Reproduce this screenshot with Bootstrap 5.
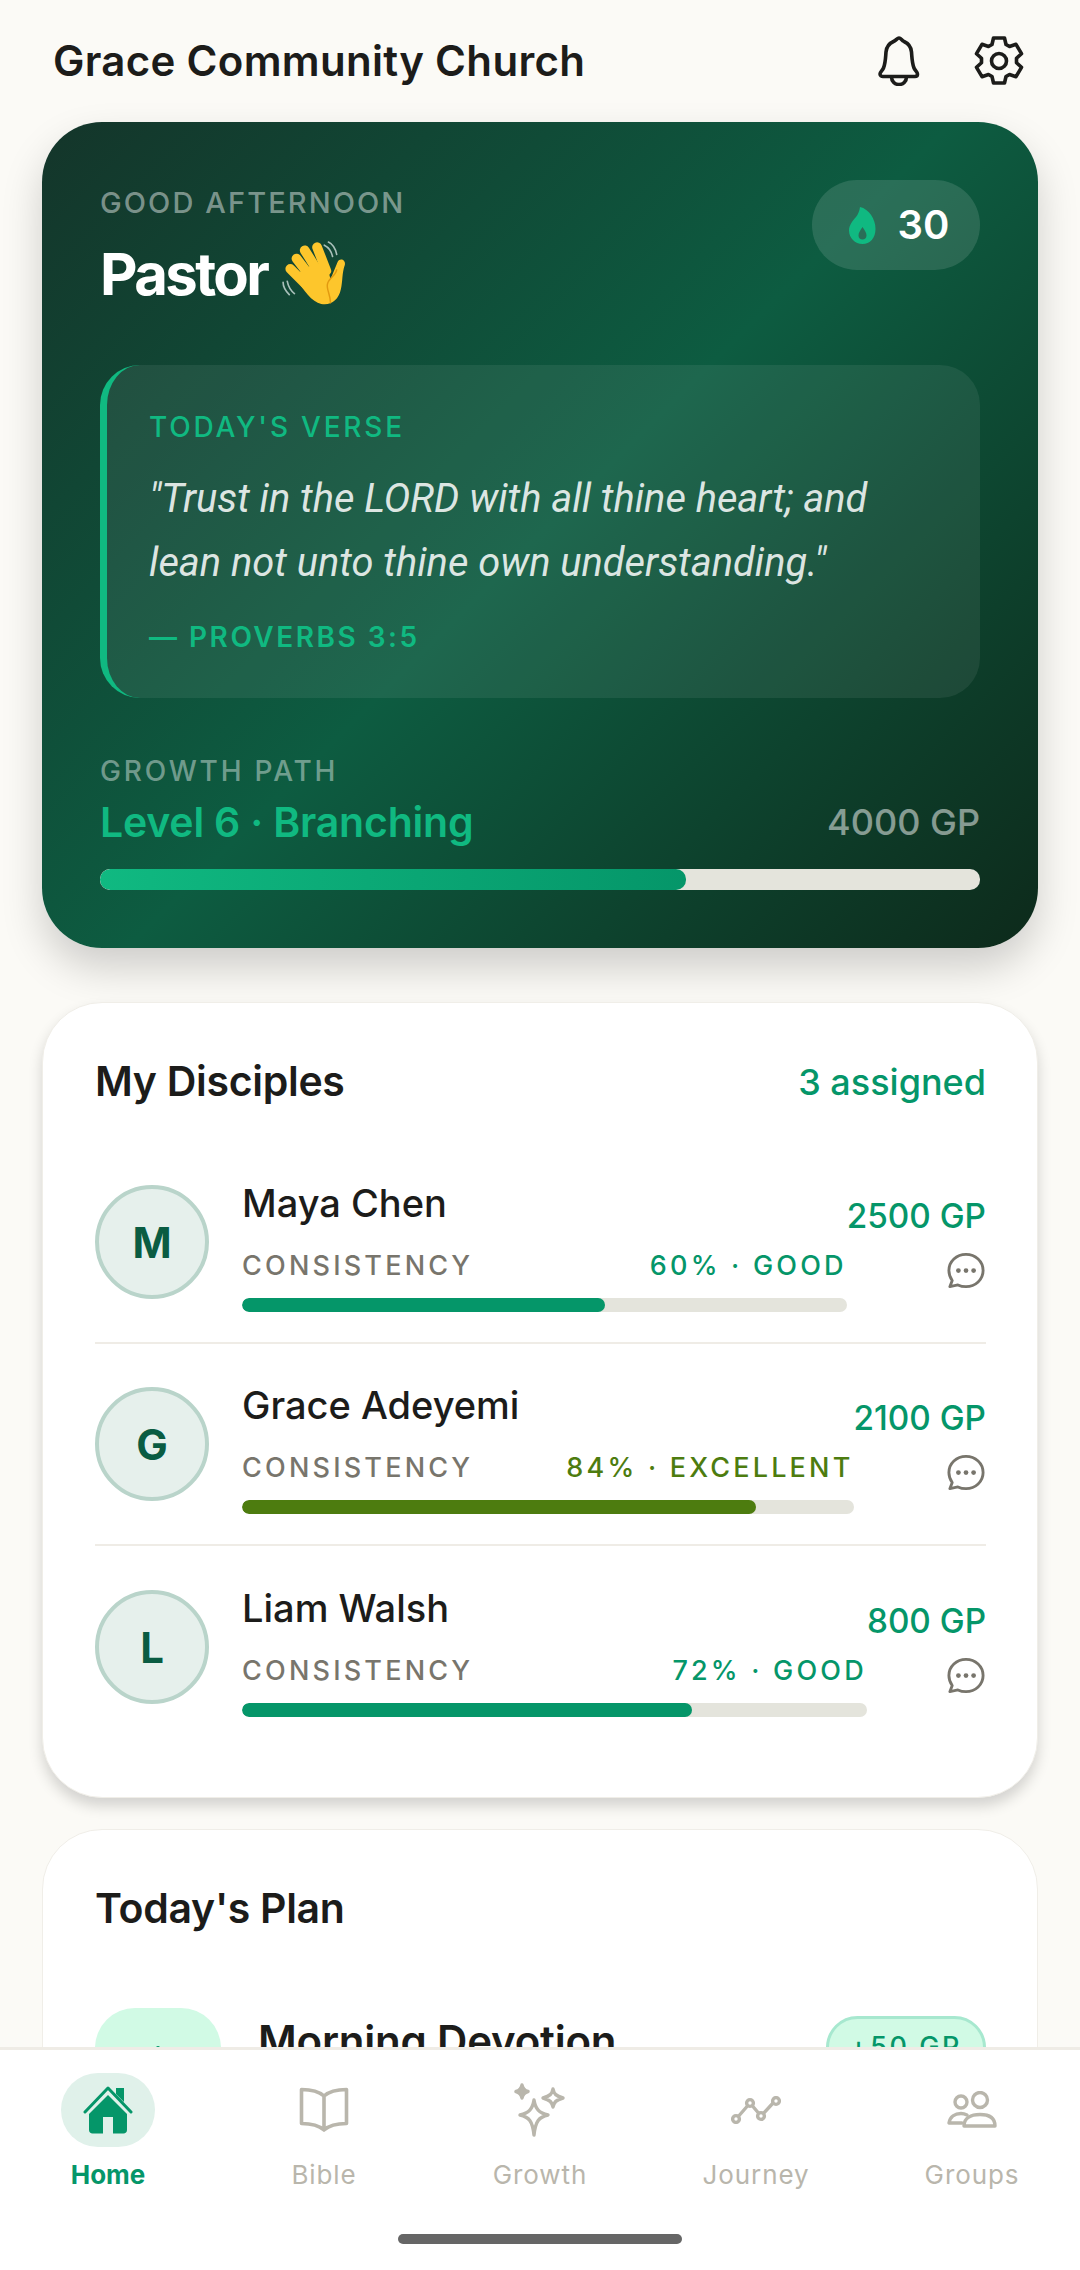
<!DOCTYPE html>
<html lang="en">
<head>
    <meta charset="UTF-8">
    <meta name="viewport" content="width=device-width, initial-scale=1.0">
    <title>Grace Community Church</title>
    <link href="https://cdn.jsdelivr.net/npm/bootstrap@5.3.0/dist/css/bootstrap.min.css" rel="stylesheet">
    <style>
        html, body { height: 2270px; overflow: hidden; }
        body {
            background: #fbfaf6;
            color: #1c1c1a;
            font-family: Inter, "Liberation Sans", sans-serif;
        }
        .app-shell { height: 2270px; }
        .app-scroll { min-height: 0; overflow: hidden; padding: 0 42px; }

        .top-bar { height: 122px; padding: 0 12px 0 11px; }
        .church-name { font-size: 42px; font-weight: 600; letter-spacing: .3px; margin: 0; }
        .top-icons { gap: 54px; margin-right: 2px; }

        .hero-card {
            height: 826px;
            padding: 58px;
            border-radius: 60px;
            color: #fff;
            background: linear-gradient(135deg, #14352a 0%, #0d5c41 50%, #0d2a1b 100%);
            box-shadow: 0 20px 40px rgba(0, 0, 0, .18);
        }
        .greet-label { font-size: 29px; font-weight: 500; letter-spacing: 2.1px; color: rgba(255, 255, 255, .45); line-height: 46px; }
        .greet-row { margin-top: 10px; gap: 14px; height: 76px; }
        .greet-name { font-size: 58px; font-weight: 700; line-height: 76px; margin: 0; letter-spacing: -2.6px; }
        .streak-pill { width: 168px; height: 90px; gap: 22px; padding-left: 6px; border-radius: 45px; background: rgba(255, 255, 255, .12); font-size: 40px; font-weight: 600; }

        .verse-box {
            margin-top: 53px;
            height: 333px;
            padding: 44px 44px 0 42px;
            border-left: 7px solid #10b981;
            border-radius: 40px;
            background: rgba(255, 255, 255, .07);
        }
        .verse-label { font-size: 28px; font-weight: 500; letter-spacing: 2.8px; color: #10b981; line-height: 36px; }
        .verse-text { font-family: Roboto, sans-serif; font-style: italic; font-weight: 400; font-size: 39.8px; line-height: 64px; color: rgba(255, 255, 255, .86); margin: 22px 0 0; }
        .verse-ref { font-size: 28px; font-weight: 600; letter-spacing: 2.5px; color: #10b981; line-height: 36px; margin-top: 24px; }

        .path-label { margin-top: 56px; font-size: 28px; font-weight: 500; letter-spacing: 2.8px; color: rgba(255, 255, 255, .42); line-height: 34px; }
        .path-row { margin-top: 7px; }
        .path-level { font-size: 41px; font-weight: 600; color: #10b981; line-height: 54px; letter-spacing: -.2px; }
        .path-gp { font-size: 36px; font-weight: 500; color: rgba(255, 255, 255, .5); }
        .path-track { height: 21px; margin-top: 20px; border-radius: 10px; background: #e4e4dc; overflow: hidden; }
        .path-fill { height: 100%; border-radius: 10px; background: linear-gradient(90deg, #10b981, #059669); }

        .white-card {
            border-radius: 60px;
            background: #fff;
            border: 1px solid #f0eee8;
            padding: 0 51px 0 52px;
        }
        .disciples-card { margin-top: 54px; height: 796px; box-shadow: 0 8px 14px rgba(0, 0, 0, .16); }
        .plan-card { margin-top: 31px; height: 500px; }
        .card-head { height: 139px; padding-top: 18px; }
        .plan-head { height: 157px; }
        .card-title { font-size: 41px; font-weight: 600; margin: 0; letter-spacing: -.3px; }
        .assigned-count { font-size: 36px; font-weight: 500; color: #059669; }

        .disciple-row { height: 202px; padding: 30px 0; gap: 33px; border-bottom: 2px solid #efece6; }
        .disciple-row:last-child { border-bottom: 0; }
        .disciple-avatar {
            flex: 0 0 114px; height: 114px; border-radius: 50%;
            background: #e6f0ec; border: 4px solid #b9d4ca;
            color: #0a5c42; font-size: 42px; font-weight: 700;
        }
        .disciple-name { font-size: 38px; font-weight: 500; line-height: 46px; margin-top: 8px; }
        .consistency-line { font-size: 27px; line-height: 36px; letter-spacing: 3.2px; margin-top: 22px; }
        .consistency-label { color: #78756c; font-weight: 500; }
        .consistency-good { color: #059669; font-weight: 500; }
        .consistency-top { color: #4d7c0f; font-weight: 500; }
        .mini-track { height: 14px; margin-top: 14px; border-radius: 7px; background: #e4e4dc; overflow: hidden; }
        .mini-fill { height: 100%; border-radius: 7px; background: #059669; }
        .mini-fill.top-fill { background: #4d7c0f; }
        .disciple-gp { font-size: 33.3px; font-weight: 500; color: #059669; line-height: 42px; margin-top: 23px; white-space: nowrap; }
        .chat-btn { margin-top: 15px; margin-right: 1px; line-height: 0; }

        .plan-item { gap: 37px; margin-top: 21px; }
        .plan-thumb { flex: 0 0 126px; height: 126px; border-radius: 40px; background: #d1fae5; }
        .plan-title { font-size: 42px; font-weight: 600; margin: 1px 0 0; letter-spacing: -.2px; }
        .plan-gp { padding: 8px 21px; border-radius: 40px; background: #d1fae5; border: 3px solid #a7e8cf; color: #059669; font-size: 27px; font-weight: 500; letter-spacing: 2.6px; margin-top: 8px; }

        .bottom-nav { flex: 0 0 223px; background: #fff; border-top: 3px solid #efece6; position: relative; }
        .nav-tab { flex: 1 1 0; padding-top: 23px; color: #b9b6ac; font-size: 26px; letter-spacing: .9px; }
        .nav-tab.active-tab { color: #059669; font-weight: 700; letter-spacing: 0; }
        .tab-icon { width: 94px; height: 74px; border-radius: 37px; }
        .active-tab .tab-icon { background: #e0f1ea; }
        .tab-text { line-height: 34px; margin-top: 11px; }
        .home-bar { position: absolute; left: 398px; bottom: 26px; width: 284px; height: 10px; border-radius: 5px; background: #666; }
    </style>
</head>
<body>

<div class="app-shell d-flex flex-column">
    <div class="app-scroll flex-grow-1">
        <div class="top-bar d-flex justify-content-between align-items-center">
            <h1 class="church-name">Grace Community Church</h1>
            <div class="top-icons d-flex align-items-center">
                <svg width="42" height="50" viewBox="0 0 42 50" fill="none" stroke="#1c1c1a" stroke-width="3.6" stroke-linejoin="round"><path d="M21 2c2 0 2.500 2.300 5 3.500 4.500 2 7 5 7.500 10.500.500 6 .500 11 2.500 16 1 2.500 3.500 4 3.500 6 0 1.500-1 2.500-2.500 2.500h-32C3.500 40.500 2 39.500 2 38c0-2 2.500-3.500 3.500-6 2-5 2-10 2.500-16 .500-5.500 3-8.500 7.500-10.500C18.500 4.300 19 2 21 2z"/><path d="M13.500 41c0 4.500 3.500 7.500 7.500 7.500s7.500-3 7.500-7.500"/></svg>
                <svg width="50" height="52" viewBox="0 0 50 52" fill="none" stroke="#1c1c1a" stroke-width="3.6" stroke-linejoin="round"><path d="M19.500 2h11l1.500 6.500 3.500 2 6.500-2.200 5.500 9.400-5 4.600v4.400l5 4.600-5.500 9.400-6.500-2.200-3.500 2-1.500 6.500h-11L18 40.500l-3.500-2L8 40.700 2.500 31.300l5-4.600v-4.400l-5-4.600L8 8.300l6.500 2.200 3.500-2z" transform="translate(0 1)"/><circle cx="25" cy="26" r="7.500"/></svg>
            </div>
        </div>

        <div class="hero-card">
            <div class="d-flex justify-content-between align-items-start">
                <div>
                    <div class="greet-label">GOOD AFTERNOON</div>
                    <div class="greet-row d-flex align-items-center">
                        <h2 class="greet-name">Pastor</h2>
                        <svg width="66" height="68" viewBox="12 10 64 66">
                            <g fill="none" stroke="#fdc62c" stroke-width="9.5" stroke-linecap="round">
                                <path d="M21 38 37 54"/>
                                <path d="M27 28 44 50"/>
                                <path d="M35 20 50 44"/>
                                <path d="M47 17 56 40"/>
                            </g>
                            <path fill="#fdc62c" d="M25 44 46 32l11 4 3 12 7-17c2-4 8-2 7 3-3 8-2 16-4 24-2 10-10 16-19 14-9-2-17-12-26-28z"/>
                            <path fill="none" stroke="#e29a10" stroke-width="1.400" stroke-linecap="round" d="M66 39c-1 6-8 8-9 14-1 5 3 10 3 18"/>
                            <path fill="none" stroke="#a9c0ba" stroke-width="1.600" stroke-linecap="round" d="M54 15c4 2 7 6 8 11M58 12c4 2 7 7 8 12M18 50c1 5 3 9 7 12M14 51c0 5 3 9 6 12"/>
                        </svg>
                    </div>
                </div>
                <div class="streak-pill d-flex align-items-center justify-content-center">
                    <svg width="27" height="37" viewBox="0 0 27 37"><path fill="#10b981" fill-rule="evenodd" d="M11 0c9 2 15.500 12 15.500 22 0 9-5.500 15-13 15S0 31 0 23.500C0 18 4 13.500 7 10 9 7.500 10.500 4 11 0zM13.500 20c-2.500 3.500-4 6-4 8.500 0 2.500 1.800 4 4 4s4-1.500 4-4c0-2.500-1.500-5-4-8.500z"/></svg>
                    <span>30</span>
                </div>
            </div>

            <div class="verse-box">
                <div class="verse-label">TODAY'S VERSE</div>
                <p class="verse-text">"Trust in the LORD with all thine heart; and lean not unto thine own understanding."</p>
                <div class="verse-ref">— PROVERBS 3:5</div>
            </div>

            <div class="path-label">GROWTH PATH</div>
            <div class="path-row d-flex justify-content-between align-items-center">
                <span class="path-level">Level 6 · Branching</span>
                <span class="path-gp">4000 GP</span>
            </div>
            <div class="path-track"><div class="path-fill" style="width: 66.6%"></div></div>
        </div>

        <div class="white-card disciples-card">
            <div class="card-head d-flex justify-content-between align-items-center">
                <h3 class="card-title">My Disciples</h3>
                <span class="assigned-count">3 assigned</span>
            </div>

            <div class="disciple-row d-flex align-items-center">
                <div class="disciple-avatar d-flex align-items-center justify-content-center">M</div>
                <div class="flex-grow-1 d-flex">
                    <div class="flex-grow-1">
                        <div class="disciple-name">Maya Chen</div>
                        <div class="consistency-line d-flex justify-content-between">
                            <span class="consistency-label">CONSISTENCY</span>
                            <span class="consistency-good">60% · GOOD</span>
                        </div>
                        <div class="mini-track"><div class="mini-fill" style="width: 60%"></div></div>
                    </div>
                    <div class="d-flex flex-column align-items-end">
                        <div class="disciple-gp">2500 GP</div>
                        <div class="chat-btn"><svg width="38" height="37" viewBox="0 0 40 38" fill="none" stroke="#78756c" stroke-width="3" stroke-linejoin="round"><path d="M20 2c10 0 18 7.500 18 17s-8 17-18 17c-3 0-6-.600-8.500-1.800L3 36l2.500-6.500C3.300 26.500 2 23 2 19 2 9.500 10 2 20 2z"/><g fill="#78756c" stroke="none"><circle cx="12" cy="19" r="2.500"/><circle cx="20" cy="19" r="2.500"/><circle cx="28" cy="19" r="2.500"/></g></svg></div>
                    </div>
                </div>
            </div>

            <div class="disciple-row d-flex align-items-center">
                <div class="disciple-avatar d-flex align-items-center justify-content-center">G</div>
                <div class="flex-grow-1 d-flex">
                    <div class="flex-grow-1">
                        <div class="disciple-name">Grace Adeyemi</div>
                        <div class="consistency-line d-flex justify-content-between">
                            <span class="consistency-label">CONSISTENCY</span>
                            <span class="consistency-top">84% · EXCELLENT</span>
                        </div>
                        <div class="mini-track"><div class="mini-fill top-fill" style="width: 84%"></div></div>
                    </div>
                    <div class="d-flex flex-column align-items-end">
                        <div class="disciple-gp">2100 GP</div>
                        <div class="chat-btn"><svg width="38" height="37" viewBox="0 0 40 38" fill="none" stroke="#78756c" stroke-width="3" stroke-linejoin="round"><path d="M20 2c10 0 18 7.500 18 17s-8 17-18 17c-3 0-6-.600-8.500-1.800L3 36l2.500-6.500C3.300 26.500 2 23 2 19 2 9.500 10 2 20 2z"/><g fill="#78756c" stroke="none"><circle cx="12" cy="19" r="2.500"/><circle cx="20" cy="19" r="2.500"/><circle cx="28" cy="19" r="2.500"/></g></svg></div>
                    </div>
                </div>
            </div>

            <div class="disciple-row d-flex align-items-center">
                <div class="disciple-avatar d-flex align-items-center justify-content-center">L</div>
                <div class="flex-grow-1 d-flex">
                    <div class="flex-grow-1">
                        <div class="disciple-name">Liam Walsh</div>
                        <div class="consistency-line d-flex justify-content-between">
                            <span class="consistency-label">CONSISTENCY</span>
                            <span class="consistency-good">72% · GOOD</span>
                        </div>
                        <div class="mini-track"><div class="mini-fill" style="width: 72%"></div></div>
                    </div>
                    <div class="d-flex flex-column align-items-end">
                        <div class="disciple-gp">800 GP</div>
                        <div class="chat-btn"><svg width="38" height="37" viewBox="0 0 40 38" fill="none" stroke="#78756c" stroke-width="3" stroke-linejoin="round"><path d="M20 2c10 0 18 7.500 18 17s-8 17-18 17c-3 0-6-.600-8.500-1.800L3 36l2.500-6.500C3.300 26.500 2 23 2 19 2 9.500 10 2 20 2z"/><g fill="#78756c" stroke="none"><circle cx="12" cy="19" r="2.500"/><circle cx="20" cy="19" r="2.500"/><circle cx="28" cy="19" r="2.500"/></g></svg></div>
                    </div>
                </div>
            </div>
        </div>

        <div class="white-card plan-card">
            <div class="plan-head d-flex align-items-center">
                <h3 class="card-title">Today's Plan</h3>
            </div>
            <div class="plan-item d-flex align-items-start">
                <div class="plan-thumb d-flex align-items-center justify-content-center">
                    <svg width="52" height="52" viewBox="0 0 52 52" fill="none" stroke="#059669" stroke-width="4" stroke-linecap="round"><circle cx="26" cy="26" r="10"/><path d="M26 3v7M26 42v7M3 26h7M42 26h7M10 10l5 5M37 37l5 5M10 42l5-5M37 15l5-5"/></svg>
                </div>
                <div class="flex-grow-1"><div class="plan-title">Morning Devotion</div></div>
                <div class="plan-gp">+50 GP</div>
            </div>
        </div>
    </div>

    <div class="bottom-nav d-flex">
        <div class="nav-tab active-tab d-flex flex-column align-items-center">
            <div class="tab-icon d-flex align-items-center justify-content-center">
                <svg width="50" height="48" viewBox="0 0 50 48"><path fill="#059669" d="M25 9 6 28v16c0 2 1.500 3.500 3.500 3.500H20V31h10v16.500h10.500c2 0 3.500-1.500 3.500-3.500V28z"/><path fill="#059669" d="M33 2h8v14l-8-8z"/><path fill="none" stroke="#059669" stroke-width="3" stroke-linecap="round" stroke-linejoin="round" d="M2 26 25 2l23 24"/></svg>
            </div>
            <div class="tab-text">Home</div>
        </div>
        <div class="nav-tab d-flex flex-column align-items-center">
            <div class="tab-icon d-flex align-items-center justify-content-center">
                <svg width="52" height="46" viewBox="0 0 52 46" fill="none" stroke="#b9b6ac" stroke-width="3.600" stroke-linejoin="round" stroke-linecap="round"><path d="M26 9C21 4.500 13 2.500 3.500 2.500v34c9.500 0 17.500 2 22.500 6.500 5-4.500 13-6.500 22.500-6.500v-34C39 2.500 31 4.500 26 9zM26 9v34"/></svg>
            </div>
            <div class="tab-text">Bible</div>
        </div>
        <div class="nav-tab d-flex flex-column align-items-center">
            <div class="tab-icon d-flex align-items-center justify-content-center">
                <svg width="54" height="54" viewBox="0 0 54 54" fill="none" stroke="#b9b6ac" stroke-width="3.400" stroke-linejoin="round"><path d="M21 17c1.500 9 5 13 14 15-9 2-12.500 6-14 20-1.500-14-5-18-14-20 9-2 12.500-6 14-15z"/><path d="M9 2c.8 4 2.500 5.500 6 6.500-3.500 1-5.200 2.500-6 6.500-.8-4-2.500-5.500-6-6.500 3.500-1 5.200-2.500 6-6.500z" fill="#b9b6ac"/><path d="M40 6c1 5 3 7 10 9-7 2-9 4-10 9-1-5-3-7-10-9 7-2 9-4 10-9z"/></svg>
            </div>
            <div class="tab-text">Growth</div>
        </div>
        <div class="nav-tab d-flex flex-column align-items-center">
            <div class="tab-icon d-flex align-items-center justify-content-center">
                <svg width="50" height="28" viewBox="0 0 50 28" fill="none" stroke="#b9b6ac" stroke-width="3.400"><path d="M6 22 19 7l11 13L43 6"/><g fill="#fff"><circle cx="5" cy="23" r="3.400"/><circle cx="19" cy="7" r="3.400"/><circle cx="30" cy="20" r="3.400"/><circle cx="45" cy="5" r="3.400"/></g></svg>
            </div>
            <div class="tab-text">Journey</div>
        </div>
        <div class="nav-tab d-flex flex-column align-items-center">
            <div class="tab-icon d-flex align-items-center justify-content-center">
                <svg width="50" height="38" viewBox="0 0 50 38" fill="none" stroke="#b9b6ac" stroke-width="3.400" stroke-linejoin="round" stroke-linecap="round"><circle cx="14" cy="11" r="6"/><circle cx="33" cy="9" r="7.500"/><path d="M20 24c-2-1-4-1.500-6-1.500-6 0-11 3-12 9.500h13"/><path d="M17 35c0-8 7-11.500 16-11.500S48 27 48 35z"/></svg>
            </div>
            <div class="tab-text">Groups</div>
        </div>
        <div class="home-bar"></div>
    </div>
</div>

<script src="https://cdn.jsdelivr.net/npm/bootstrap@5.3.0/dist/js/bootstrap.bundle.min.js"></script>
</body>
</html>
